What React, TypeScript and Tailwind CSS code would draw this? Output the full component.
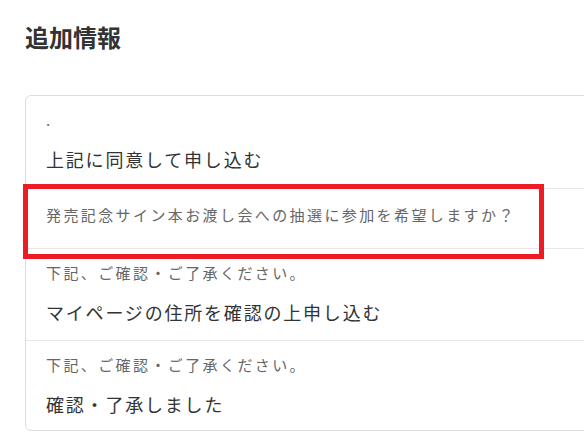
import React from 'react';

type Row = { label: string; value?: string };

const rows: Row[] = [
  { label: '.', value: '上記に同意して申し込む' },
  { label: '発売記念サイン本お渡し会への抽選に参加を希望しますか？' },
  { label: '下記、ご確認・ご了承ください。', value: 'マイページの住所を確認の上申し込む' },
  { label: '下記、ご確認・ご了承ください。', value: '確認・了承しました' },
];

const font = { fontFamily: '"Noto Sans CJK JP", "Noto Sans", sans-serif' };

export default function App() {
  return (
    <div className="w-[584px] h-[440px] overflow-hidden bg-white pl-[25px]" style={font}>
      <h2 className="pt-[21px] text-[24px] leading-[32px] font-bold text-[#333]">追加情報</h2>

      <div className="mt-[42px] w-[600px] rounded-md border border-[#dcdcdc] bg-white">
        {rows.map((row, i) =>
          row.value ? (
            <div
              key={i}
              className={`px-[20px] pt-[13px] ${i === 0 ? 'pb-[15px]' : i === 2 ? 'pb-[14px]' : 'pb-[12px]'} ${
                i > 0 ? 'border-t border-[#e8e8e8]' : ''
              }`}
            >
              <p className="text-[15px] leading-[22px] tracking-[0.16em] text-[#666]">{row.label}</p>
              <p className="mt-[14px] text-[18px] leading-[28px] tracking-[0.1em] text-[#333]">{row.value}</p>
            </div>
          ) : (
            <div key={i} className="relative border-t border-[#e8e8e8] px-[20px] pt-[15px] pb-[22px]">
              <p className="text-[15px] leading-[22px] tracking-[0.16em] text-[#666]">{row.label}</p>
              <div className="pointer-events-none absolute left-[-3px] top-[-5px] h-[75px] w-[521px] border-[5px] border-[#ed1c24]" />
            </div>
          )
        )}
      </div>
    </div>
  );
}
